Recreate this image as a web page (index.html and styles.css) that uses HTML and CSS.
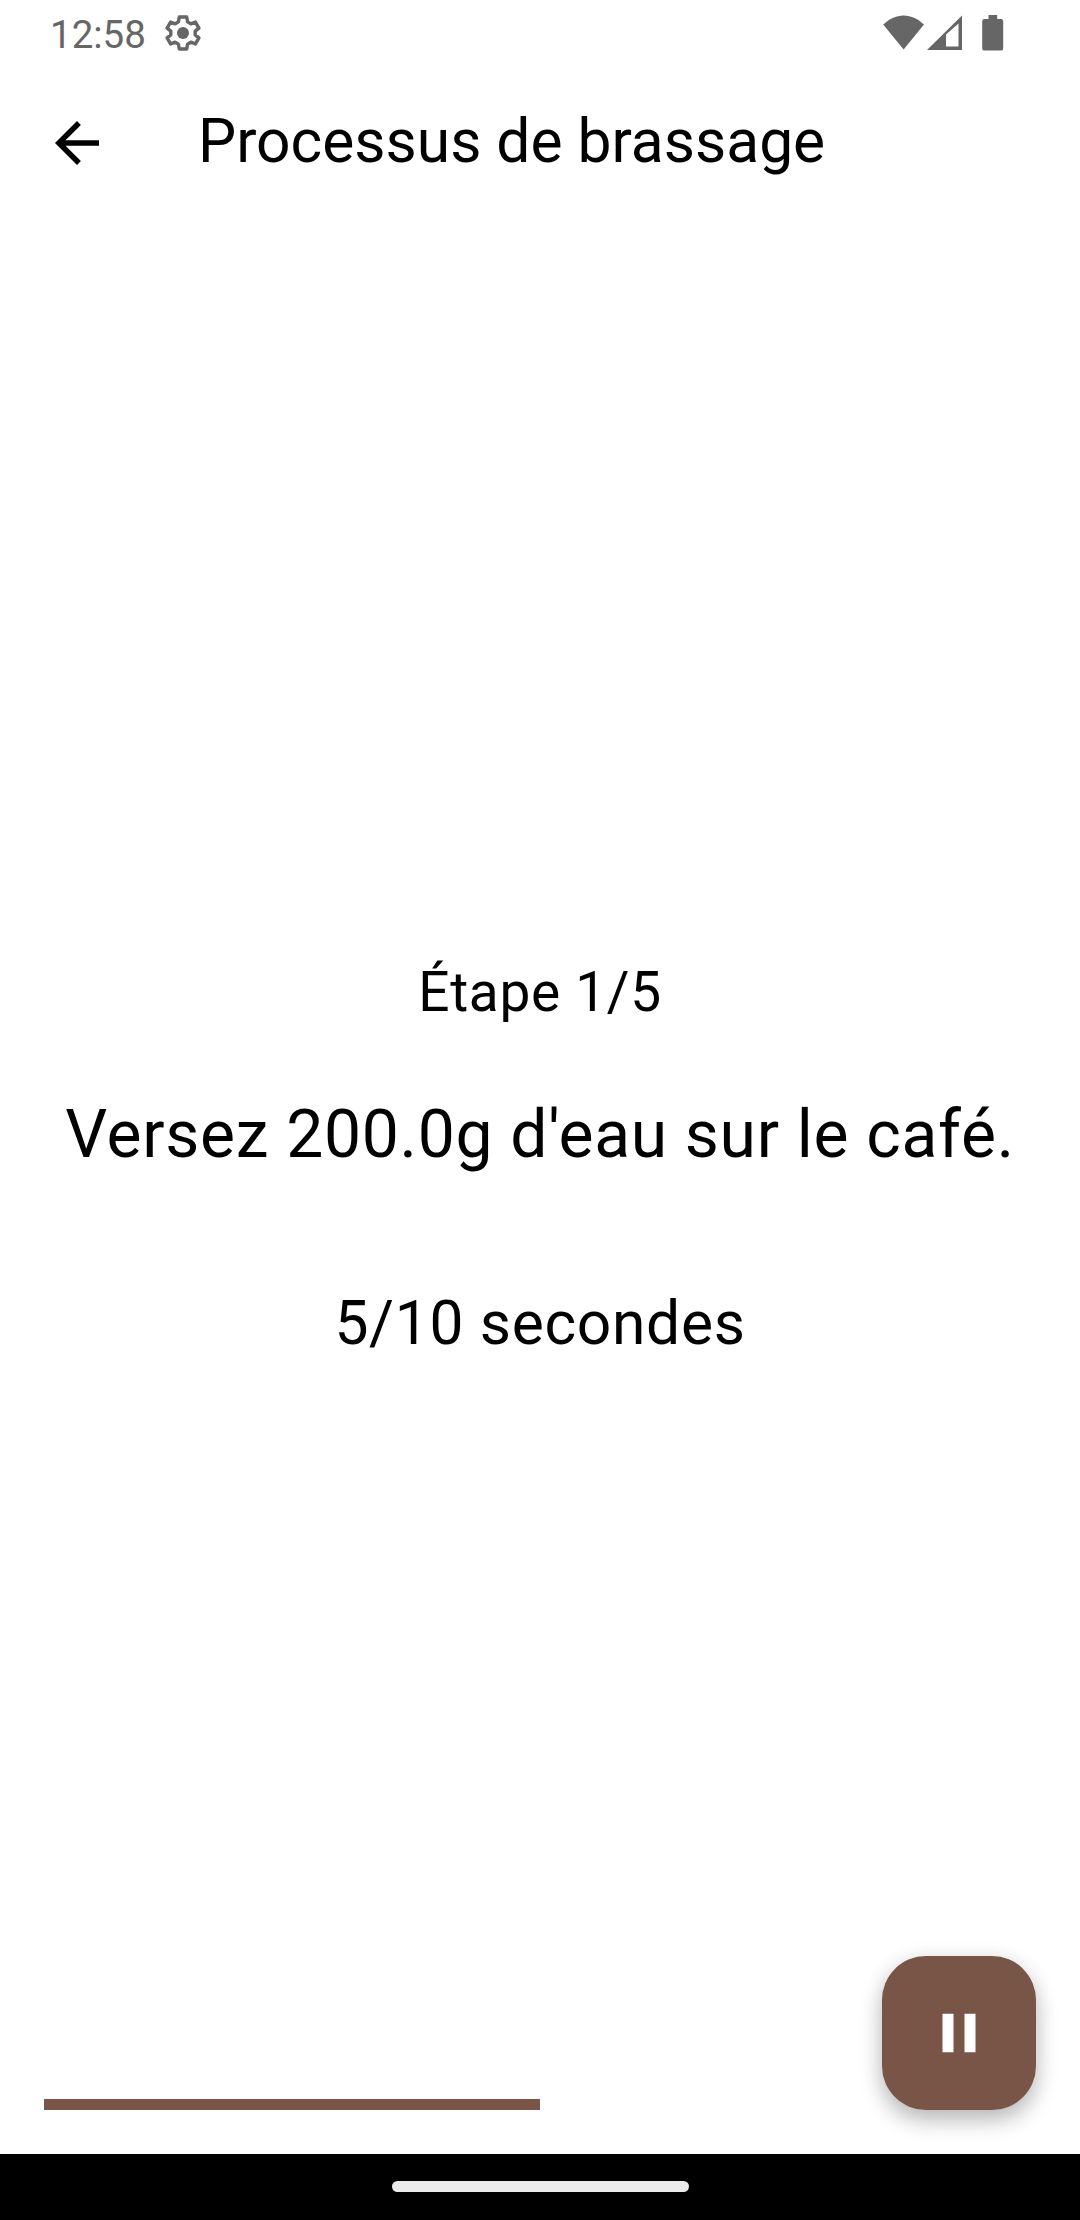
FILE: index.html
```html
<!DOCTYPE html>
<html lang="fr">
<head>
<meta charset="utf-8">
<title>Processus de brassage</title>
<link rel="stylesheet" href="styles.css">
</head>
<body>
<div class="screen">
  <div class="status-bar">
    <span class="clock">12:58</span>
    <svg class="gear" viewBox="0 0 36 36" width="36" height="36">
      <path d="M14.300 2h7.400l.9 4.900 3.200 1.900 4.600-1.700 3.500 6-3.700 3v3.800l3.700 3-3.500 6-4.600-1.700-3.200 1.900-.9 4.900h-7.400l-.9-4.900-3.200-1.900-4.600 1.700-3.500-6 3.700-3v-3.800l-3.700-3 3.500-6 4.600 1.700 3.200-1.900z" fill="none" stroke="#666" stroke-width="3.400" stroke-linejoin="round"/>
      <circle cx="18" cy="18" r="6" fill="#666"/>
    </svg>
    <div class="system-icons">
      <svg class="wifi" viewBox="0 0 42 36" width="42" height="36"><path d="M.2 9.500C6 4 13 .4 20.600 .4S35.200 4 41 9.500L20.600 34.500z" fill="#666"/></svg>
      <svg class="signal" viewBox="0 0 36 36" width="36" height="36"><path fill-rule="evenodd" d="M0 35L35 .5V35zM19 19.500V31.500H31.500V8.500z" fill="#666"/></svg>
      <svg class="battery" viewBox="0 0 22 36" width="22" height="36"><path d="M6.500 0h8.700v4H19q2.200 0 2.200 2.200v27.200q0 2.200-2.200 2.200H2.400q-2.200 0-2.200-2.200V6.200Q.2 4 2.400 4h4.100z" fill="#666"/></svg>
    </div>
  </div>
  <header class="app-bar">
    <svg viewBox="0 0 24 24" width="66" height="66"><path d="M20 11H7.830l5.590-5.590L12 4l-8 8 8 8 1.410-1.410L7.830 13H20z"/></svg>
    <h1 class="title">Processus de brassage</h1>
  </header>
  <main class="content">
    <p class="step">Étape 1/5</p>
    <p class="instruction">Versez 200.0g d'eau sur le café.</p>
    <p class="timer">5/10 secondes</p>
  </main>
  <footer class="controls">
    <div class="progress"><div class="progress-value" style="width: 50%"></div></div>
    <button class="fab" aria-label="Pause">
      <svg viewBox="0 0 24 24" width="66" height="66"><path d="M6 19h4V5H6zm8-14v14h4V5z" fill="#fff"/></svg>
    </button>
  </footer>
  <div class="nav-bar"><div class="handle"></div></div>
</div>
</body>
</html>
```
FILE: styles.css
```css
* { box-sizing: border-box; }
body { margin: 0; background: #fff; }
.screen {
  display: flex;
  flex-direction: column;
  width: 1080px;
  height: 2220px;
  overflow: hidden;
  background: #fff;
  color: #000;
  font-family: Roboto, sans-serif;
}
.status-bar {
  display: flex;
  align-items: flex-start;
  height: 66px;
  padding: 15px 76px 0 50px;
  color: #666;
}
.clock { width: 115.3px; font-size: 38.5px; line-height: 40px; }
.gear { margin-top: .4px; }
.system-icons { display: flex; margin-left: auto; }
.signal { margin-left: 2px; }
.battery { margin-left: 19px; }
.app-bar {
  display: flex;
  align-items: center;
  height: 154px;
  padding-left: 44px;
}
.title {
  margin: 0 0 3px 88px;
  font-size: 60.5px;
  font-weight: 400;
  line-height: 77px;
}
.content {
  display: flex;
  flex: 1;
  flex-direction: column;
  align-items: center;
  padding-top: 739px;
  white-space: nowrap;
}
.content p { margin: 0; letter-spacing: .6875px; }
.content .step { font-size: 55px; line-height: 66px; }
.content .instruction { margin-top: 66px; font-size: 66px; line-height: 88px; }
.content .timer { margin-top: 106px; font-size: 60.5px; line-height: 77px; }
.controls {
  display: flex;
  align-items: flex-end;
  height: 198px;
  padding: 0 44px 44px;
}
.progress { flex: 1; height: 11px; margin-right: -154px; }
.progress-value { height: 11px; background: #795548; }
.fab {
  display: flex;
  align-items: center;
  justify-content: center;
  width: 154px;
  height: 154px;
  padding: 0;
  border: 0;
  border-radius: 44px;
  background: #795548;
  box-shadow: 0 11px 22px rgba(0, 0, 0, .24), 0 2px 22px rgba(0, 0, 0, .08);
}
.nav-bar {
  display: flex;
  justify-content: center;
  height: 66px;
  padding-top: 27.4px;
  background: #000;
}
.handle { width: 297px; height: 11px; border-radius: 6px; background: #ebebeb; }
```
